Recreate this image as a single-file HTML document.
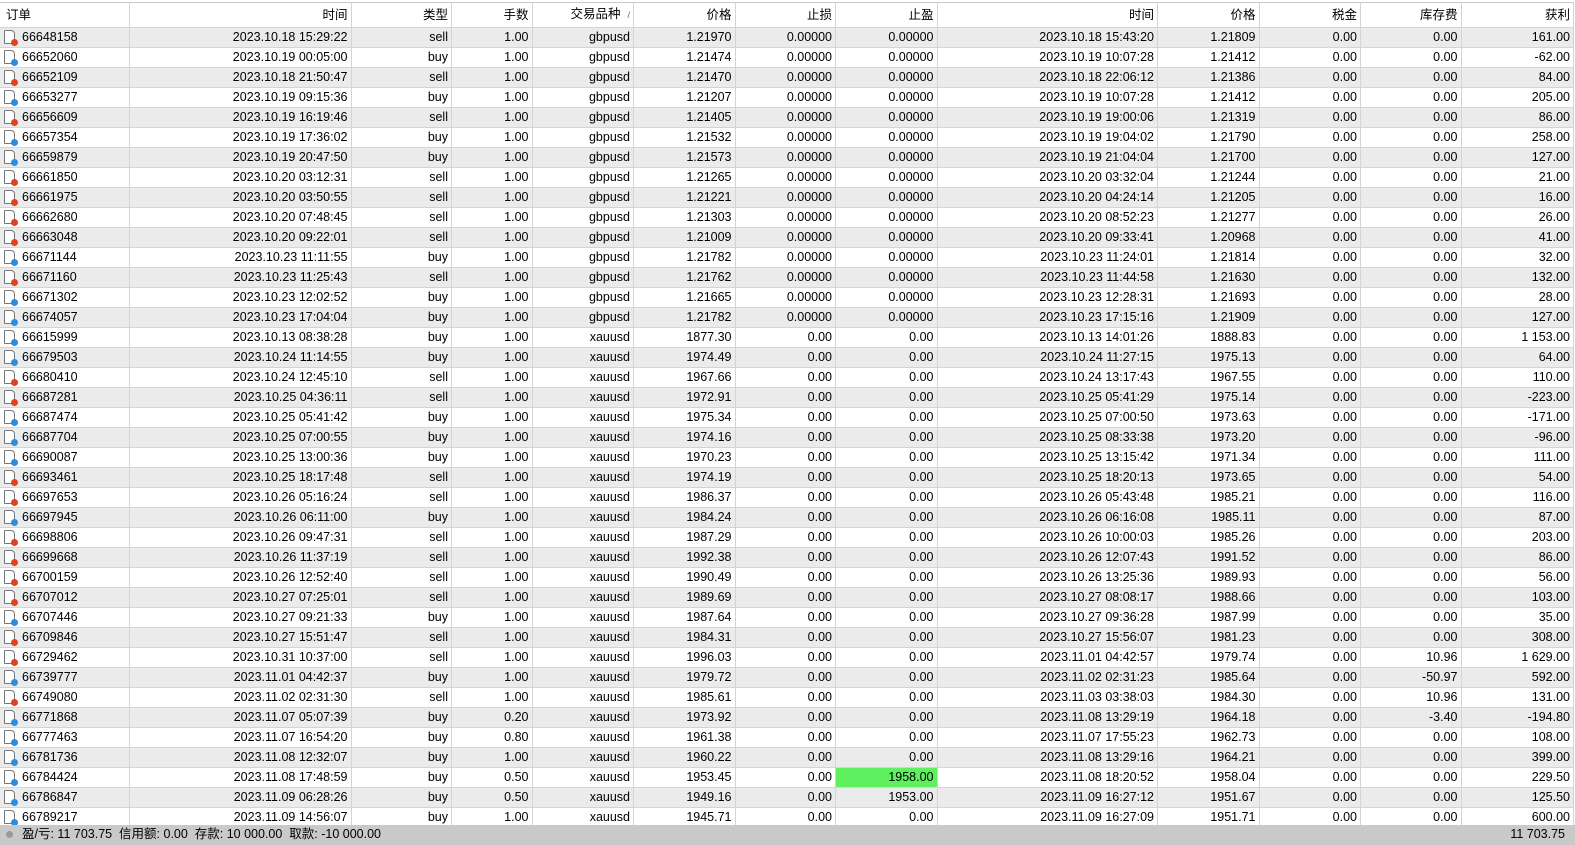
<!DOCTYPE html>
<html><head><meta charset="utf-8"><style>
*{margin:0;padding:0;box-sizing:border-box}
body{width:1575px;height:845px;overflow:hidden;background:#fff;font-family:"Liberation Sans","Noto Sans CJK SC",sans-serif;font-size:12.5px;color:#000;position:relative}
table{position:absolute;left:0;top:2px;border-collapse:collapse;table-layout:fixed;width:1573.5px}
td,th{height:20px;padding:0 3px 0 3px;text-align:right;white-space:nowrap;overflow:hidden;border-right:1px solid #d4d4d4;border-bottom:1px solid #d4d4d4;font-weight:normal;line-height:19px}
th{height:25px;border-top:1px solid #c8c8c8;font-size:12.5px}
th:first-child{text-align:left;padding-left:6px}
td:first-child{text-align:left;padding-left:22px;position:relative}
tr:nth-child(even) td{background:#ebebeb}
.ic{position:absolute;left:4px;top:2px;width:11px;height:14px;border:1px solid #777;background:#fff;border-radius:1px 4px 1px 1px}
.ic:after{content:"";position:absolute;right:-4px;bottom:-3px;width:7px;height:7px;border-radius:50%;background:#2a8ee0}
.r:after{background:#e0421e}
.g{background:#5ef05e!important}
#ft{position:absolute;left:0;top:825px;width:1575px;height:20px;background:#c9c9c9;line-height:19px;padding-left:22px;font-size:12.5px}
#ft:before{content:"";position:absolute;left:6px;top:6px;width:7px;height:7px;border-radius:50%;background:#999}
#ft span{position:absolute;right:10px}
</style></head><body>
<table>
<colgroup><col style="width:129.5px"><col style="width:221.5px"><col style="width:100.5px"><col style="width:80.5px"><col style="width:101.5px"><col style="width:101.5px"><col style="width:100.5px"><col style="width:101.5px"><col style="width:220.5px"><col style="width:101.5px"><col style="width:101.5px"><col style="width:100.5px"><col style="width:112.5px"></colgroup>
<tr><th>订单</th><th>时间</th><th>类型</th><th>手数</th><th>交易品种 &nbsp;<span style="font-size:9px;color:#666">/</span></th><th>价格</th><th>止损</th><th>止盈</th><th>时间</th><th>价格</th><th>税金</th><th>库存费</th><th>获利</th></tr>
<tr><td><i class="ic r"></i>66648158<td>2023.10.18 15:29:22<td>sell<td>1.00<td>gbpusd<td>1.21970<td>0.00000<td>0.00000<td>2023.10.18 15:43:20<td>1.21809<td>0.00<td>0.00<td>161.00</tr>
<tr><td><i class="ic"></i>66652060<td>2023.10.19 00:05:00<td>buy<td>1.00<td>gbpusd<td>1.21474<td>0.00000<td>0.00000<td>2023.10.19 10:07:28<td>1.21412<td>0.00<td>0.00<td>-62.00</tr>
<tr><td><i class="ic r"></i>66652109<td>2023.10.18 21:50:47<td>sell<td>1.00<td>gbpusd<td>1.21470<td>0.00000<td>0.00000<td>2023.10.18 22:06:12<td>1.21386<td>0.00<td>0.00<td>84.00</tr>
<tr><td><i class="ic"></i>66653277<td>2023.10.19 09:15:36<td>buy<td>1.00<td>gbpusd<td>1.21207<td>0.00000<td>0.00000<td>2023.10.19 10:07:28<td>1.21412<td>0.00<td>0.00<td>205.00</tr>
<tr><td><i class="ic r"></i>66656609<td>2023.10.19 16:19:46<td>sell<td>1.00<td>gbpusd<td>1.21405<td>0.00000<td>0.00000<td>2023.10.19 19:00:06<td>1.21319<td>0.00<td>0.00<td>86.00</tr>
<tr><td><i class="ic"></i>66657354<td>2023.10.19 17:36:02<td>buy<td>1.00<td>gbpusd<td>1.21532<td>0.00000<td>0.00000<td>2023.10.19 19:04:02<td>1.21790<td>0.00<td>0.00<td>258.00</tr>
<tr><td><i class="ic"></i>66659879<td>2023.10.19 20:47:50<td>buy<td>1.00<td>gbpusd<td>1.21573<td>0.00000<td>0.00000<td>2023.10.19 21:04:04<td>1.21700<td>0.00<td>0.00<td>127.00</tr>
<tr><td><i class="ic r"></i>66661850<td>2023.10.20 03:12:31<td>sell<td>1.00<td>gbpusd<td>1.21265<td>0.00000<td>0.00000<td>2023.10.20 03:32:04<td>1.21244<td>0.00<td>0.00<td>21.00</tr>
<tr><td><i class="ic r"></i>66661975<td>2023.10.20 03:50:55<td>sell<td>1.00<td>gbpusd<td>1.21221<td>0.00000<td>0.00000<td>2023.10.20 04:24:14<td>1.21205<td>0.00<td>0.00<td>16.00</tr>
<tr><td><i class="ic r"></i>66662680<td>2023.10.20 07:48:45<td>sell<td>1.00<td>gbpusd<td>1.21303<td>0.00000<td>0.00000<td>2023.10.20 08:52:23<td>1.21277<td>0.00<td>0.00<td>26.00</tr>
<tr><td><i class="ic r"></i>66663048<td>2023.10.20 09:22:01<td>sell<td>1.00<td>gbpusd<td>1.21009<td>0.00000<td>0.00000<td>2023.10.20 09:33:41<td>1.20968<td>0.00<td>0.00<td>41.00</tr>
<tr><td><i class="ic"></i>66671144<td>2023.10.23 11:11:55<td>buy<td>1.00<td>gbpusd<td>1.21782<td>0.00000<td>0.00000<td>2023.10.23 11:24:01<td>1.21814<td>0.00<td>0.00<td>32.00</tr>
<tr><td><i class="ic r"></i>66671160<td>2023.10.23 11:25:43<td>sell<td>1.00<td>gbpusd<td>1.21762<td>0.00000<td>0.00000<td>2023.10.23 11:44:58<td>1.21630<td>0.00<td>0.00<td>132.00</tr>
<tr><td><i class="ic"></i>66671302<td>2023.10.23 12:02:52<td>buy<td>1.00<td>gbpusd<td>1.21665<td>0.00000<td>0.00000<td>2023.10.23 12:28:31<td>1.21693<td>0.00<td>0.00<td>28.00</tr>
<tr><td><i class="ic"></i>66674057<td>2023.10.23 17:04:04<td>buy<td>1.00<td>gbpusd<td>1.21782<td>0.00000<td>0.00000<td>2023.10.23 17:15:16<td>1.21909<td>0.00<td>0.00<td>127.00</tr>
<tr><td><i class="ic"></i>66615999<td>2023.10.13 08:38:28<td>buy<td>1.00<td>xauusd<td>1877.30<td>0.00<td>0.00<td>2023.10.13 14:01:26<td>1888.83<td>0.00<td>0.00<td>1 153.00</tr>
<tr><td><i class="ic"></i>66679503<td>2023.10.24 11:14:55<td>buy<td>1.00<td>xauusd<td>1974.49<td>0.00<td>0.00<td>2023.10.24 11:27:15<td>1975.13<td>0.00<td>0.00<td>64.00</tr>
<tr><td><i class="ic r"></i>66680410<td>2023.10.24 12:45:10<td>sell<td>1.00<td>xauusd<td>1967.66<td>0.00<td>0.00<td>2023.10.24 13:17:43<td>1967.55<td>0.00<td>0.00<td>110.00</tr>
<tr><td><i class="ic r"></i>66687281<td>2023.10.25 04:36:11<td>sell<td>1.00<td>xauusd<td>1972.91<td>0.00<td>0.00<td>2023.10.25 05:41:29<td>1975.14<td>0.00<td>0.00<td>-223.00</tr>
<tr><td><i class="ic"></i>66687474<td>2023.10.25 05:41:42<td>buy<td>1.00<td>xauusd<td>1975.34<td>0.00<td>0.00<td>2023.10.25 07:00:50<td>1973.63<td>0.00<td>0.00<td>-171.00</tr>
<tr><td><i class="ic"></i>66687704<td>2023.10.25 07:00:55<td>buy<td>1.00<td>xauusd<td>1974.16<td>0.00<td>0.00<td>2023.10.25 08:33:38<td>1973.20<td>0.00<td>0.00<td>-96.00</tr>
<tr><td><i class="ic"></i>66690087<td>2023.10.25 13:00:36<td>buy<td>1.00<td>xauusd<td>1970.23<td>0.00<td>0.00<td>2023.10.25 13:15:42<td>1971.34<td>0.00<td>0.00<td>111.00</tr>
<tr><td><i class="ic r"></i>66693461<td>2023.10.25 18:17:48<td>sell<td>1.00<td>xauusd<td>1974.19<td>0.00<td>0.00<td>2023.10.25 18:20:13<td>1973.65<td>0.00<td>0.00<td>54.00</tr>
<tr><td><i class="ic r"></i>66697653<td>2023.10.26 05:16:24<td>sell<td>1.00<td>xauusd<td>1986.37<td>0.00<td>0.00<td>2023.10.26 05:43:48<td>1985.21<td>0.00<td>0.00<td>116.00</tr>
<tr><td><i class="ic"></i>66697945<td>2023.10.26 06:11:00<td>buy<td>1.00<td>xauusd<td>1984.24<td>0.00<td>0.00<td>2023.10.26 06:16:08<td>1985.11<td>0.00<td>0.00<td>87.00</tr>
<tr><td><i class="ic r"></i>66698806<td>2023.10.26 09:47:31<td>sell<td>1.00<td>xauusd<td>1987.29<td>0.00<td>0.00<td>2023.10.26 10:00:03<td>1985.26<td>0.00<td>0.00<td>203.00</tr>
<tr><td><i class="ic r"></i>66699668<td>2023.10.26 11:37:19<td>sell<td>1.00<td>xauusd<td>1992.38<td>0.00<td>0.00<td>2023.10.26 12:07:43<td>1991.52<td>0.00<td>0.00<td>86.00</tr>
<tr><td><i class="ic r"></i>66700159<td>2023.10.26 12:52:40<td>sell<td>1.00<td>xauusd<td>1990.49<td>0.00<td>0.00<td>2023.10.26 13:25:36<td>1989.93<td>0.00<td>0.00<td>56.00</tr>
<tr><td><i class="ic r"></i>66707012<td>2023.10.27 07:25:01<td>sell<td>1.00<td>xauusd<td>1989.69<td>0.00<td>0.00<td>2023.10.27 08:08:17<td>1988.66<td>0.00<td>0.00<td>103.00</tr>
<tr><td><i class="ic"></i>66707446<td>2023.10.27 09:21:33<td>buy<td>1.00<td>xauusd<td>1987.64<td>0.00<td>0.00<td>2023.10.27 09:36:28<td>1987.99<td>0.00<td>0.00<td>35.00</tr>
<tr><td><i class="ic r"></i>66709846<td>2023.10.27 15:51:47<td>sell<td>1.00<td>xauusd<td>1984.31<td>0.00<td>0.00<td>2023.10.27 15:56:07<td>1981.23<td>0.00<td>0.00<td>308.00</tr>
<tr><td><i class="ic r"></i>66729462<td>2023.10.31 10:37:00<td>sell<td>1.00<td>xauusd<td>1996.03<td>0.00<td>0.00<td>2023.11.01 04:42:57<td>1979.74<td>0.00<td>10.96<td>1 629.00</tr>
<tr><td><i class="ic"></i>66739777<td>2023.11.01 04:42:37<td>buy<td>1.00<td>xauusd<td>1979.72<td>0.00<td>0.00<td>2023.11.02 02:31:23<td>1985.64<td>0.00<td>-50.97<td>592.00</tr>
<tr><td><i class="ic r"></i>66749080<td>2023.11.02 02:31:30<td>sell<td>1.00<td>xauusd<td>1985.61<td>0.00<td>0.00<td>2023.11.03 03:38:03<td>1984.30<td>0.00<td>10.96<td>131.00</tr>
<tr><td><i class="ic"></i>66771868<td>2023.11.07 05:07:39<td>buy<td>0.20<td>xauusd<td>1973.92<td>0.00<td>0.00<td>2023.11.08 13:29:19<td>1964.18<td>0.00<td>-3.40<td>-194.80</tr>
<tr><td><i class="ic"></i>66777463<td>2023.11.07 16:54:20<td>buy<td>0.80<td>xauusd<td>1961.38<td>0.00<td>0.00<td>2023.11.07 17:55:23<td>1962.73<td>0.00<td>0.00<td>108.00</tr>
<tr><td><i class="ic"></i>66781736<td>2023.11.08 12:32:07<td>buy<td>1.00<td>xauusd<td>1960.22<td>0.00<td>0.00<td>2023.11.08 13:29:16<td>1964.21<td>0.00<td>0.00<td>399.00</tr>
<tr><td><i class="ic"></i>66784424<td>2023.11.08 17:48:59<td>buy<td>0.50<td>xauusd<td>1953.45<td>0.00<td class="g">1958.00<td>2023.11.08 18:20:52<td>1958.04<td>0.00<td>0.00<td>229.50</tr>
<tr><td><i class="ic"></i>66786847<td>2023.11.09 06:28:26<td>buy<td>0.50<td>xauusd<td>1949.16<td>0.00<td>1953.00<td>2023.11.09 16:27:12<td>1951.67<td>0.00<td>0.00<td>125.50</tr>
<tr><td><i class="ic"></i>66789217<td>2023.11.09 14:56:07<td>buy<td>1.00<td>xauusd<td>1945.71<td>0.00<td>0.00<td>2023.11.09 16:27:09<td>1951.71<td>0.00<td>0.00<td>600.00</tr>
</table>
<div id="ft">盈/亏: 11 703.75 &nbsp;信用额: 0.00 &nbsp;存款: 10 000.00 &nbsp;取款: -10 000.00<span>11 703.75</span></div>
</body></html>
